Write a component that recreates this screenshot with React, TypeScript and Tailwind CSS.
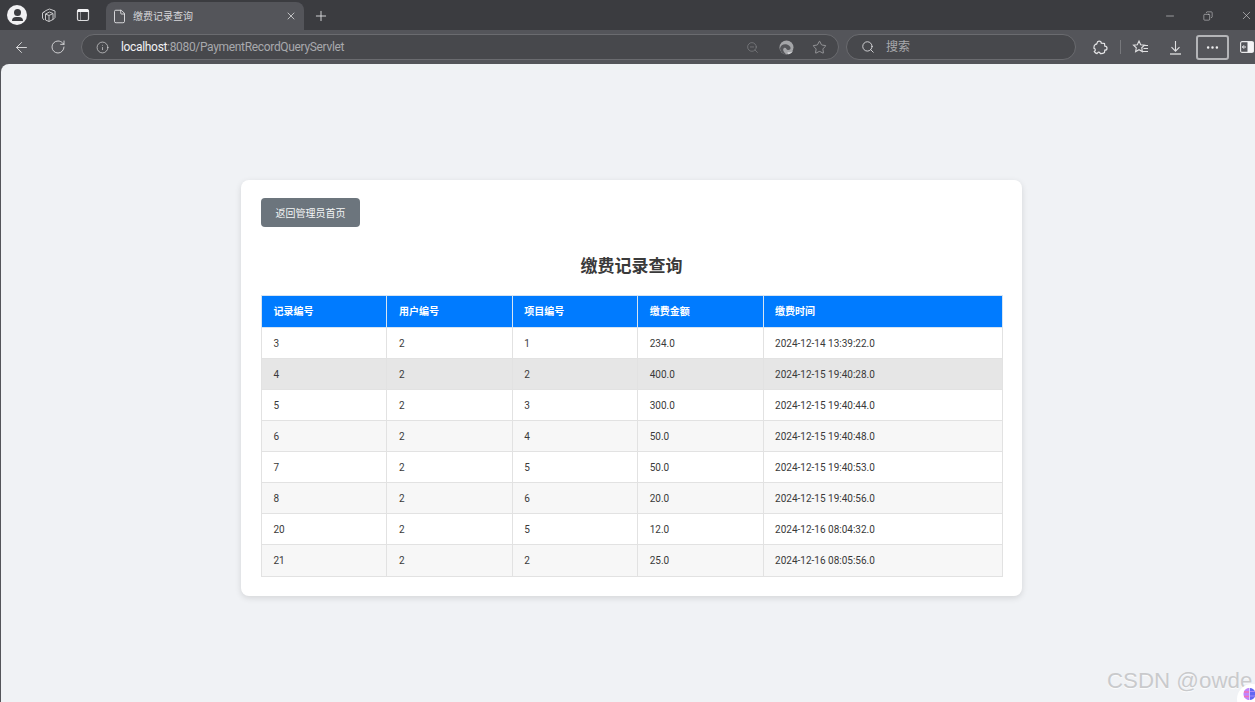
import React from "react";
import { ArrowLeft, RotateCw, Info, ZoomOut, Star, Search, Ellipsis, X, Plus, Minus, File, Copy } from "lucide-react";

const rows = [
  ["3", "2", "1", "234.0", "2024-12-14 13:39:22.0"],
  ["4", "2", "2", "400.0", "2024-12-15 19:40:28.0"],
  ["5", "2", "3", "300.0", "2024-12-15 19:40:44.0"],
  ["6", "2", "4", "50.0", "2024-12-15 19:40:48.0"],
  ["7", "2", "5", "50.0", "2024-12-15 19:40:53.0"],
  ["8", "2", "6", "20.0", "2024-12-15 19:40:56.0"],
  ["20", "2", "5", "12.0", "2024-12-16 08:04:32.0"],
  ["21", "2", "2", "25.0", "2024-12-16 08:05:56.0"],
];
const heads = ["记录编号", "用户编号", "项目编号", "缴费金额", "缴费时间"];

function TabsIcon() {
  return (
    <svg width="16" height="15" viewBox="0 0 16 15" fill="none" stroke="#c8c8ca" strokeWidth="1">
      <path d="M1.500 5 5 2.500 8.500 1 14 3v6.500L11.500 12" />
      <path d="M4 3.500 1.500 5v5L3 12" />
      <path d="M4.500 6 8.500 4 12 5.500v6L8 13.500 4.500 12Z" />
      <path d="M4.500 6 8 7.500 12 5.500M8 7.500v6" />
    </svg>
  );
}
function TabWinIcon() {
  return (
    <svg width="14" height="14" viewBox="0 0 14 14" fill="none">
      <rect x="1.500" y="1.500" width="11" height="11" rx="1.500" stroke="#dcdcde" strokeWidth="1.200" />
      <path d="M1.500 3.500a2 2 0 0 1 2-2h7a2 2 0 0 1 2 2Z" fill="#f4f4f6" stroke="#f4f4f6" />
      <path d="M4.500 4v8" stroke="#8b8c90" strokeWidth="1" />
    </svg>
  );
}
function EdgeIcon() {
  return (
    <svg width="15" height="15" viewBox="0 0 15 15">
      <circle cx="7.500" cy="7.500" r="7" fill="#a4a5a8" />
      <path d="M1 8.500C1.500 5 5 3.500 8 4.500c3 1 4.500 3.500 3 5-1 .8-3 .6-3.500-.5C7 7.800 6 7.500 5 8c-1.500 1-1 4 2.500 6.500C4 14.500 1.500 12 1 8.500Z" fill="#55565a" />
      <path d="M9 14.300c2-.3 4-1.500 5-3.300-2 1.500-4 1.500-5.500 1Z" fill="#d4d5d8" />
    </svg>
  );
}
function FavIcon() {
  return (
    <svg width="17" height="17" viewBox="0 0 17 17" fill="none" stroke="#e0e0e2" strokeWidth="1.100">
      <path d="M7 2 8.700 5.700 12.500 6.200 9.700 8.800 10.400 12.600 7 10.700 3.600 12.600 4.300 8.800 1.500 6.200 5.300 5.700Z" />
      <path d="M11.500 6.500h4.500M11.500 9.500h4.500M10.500 12.500h5.500" />
    </svg>
  );
}
function PuzzleIcon() {
  return (
    <svg width="15" height="15" viewBox="0 0 15 15" fill="none" stroke="#e4e4e6" strokeWidth="1.200">
      <path d="M6 1.200c1.400 0 2.300 1 2.300 2l3.200.3.300 2.700c1.300 0 2.200.8 2.200 2s-1 2-2.200 2l-.3 2.300c-1 .8-2.500 1.300-4 1.200-.5-1.300-1.500-1.800-2.500-1.300-.5.300-.8.700-1 1.200-1-.3-2-1-2.700-2 .8-.5 1.200-1.400.9-2.200C1.900 8.600 1.400 8.300.9 8.200.8 6.800 1.300 5 2.500 4.200c.5.300 1.200 0 1.400-.7C4.100 2.200 4.800 1.200 6 1.200Z" />
    </svg>
  );
}
function DownloadIcon() {
  return (
    <svg width="15" height="15" viewBox="0 0 15 15" fill="none" stroke="#e0e0e2" strokeWidth="1.100">
      <path d="M7.500 1v10M3.500 7.200l4 4 4-4" />
      <path d="M2 14h11" strokeWidth="1.300" />
    </svg>
  );
}
function SplitIcon() {
  return (
    <svg width="14" height="12" viewBox="0 0 14 12" fill="none">
      <rect x="0.600" y="0.600" width="12.800" height="10.800" rx="1.500" stroke="#e8e8ea" strokeWidth="1.100" />
      <rect x="7.500" y="1" width="6" height="10" fill="#f4f4f6" />
      <path d="M6 6H2.500M4 4.300 2.400 6 4 7.700" stroke="#f4f4f6" strokeWidth="1" />
    </svg>
  );
}
function Brain() {
  return (
    <svg width="13" height="14" viewBox="0 0 13 14">
      <path d="M6.200 1C3 1 .5 3.500.5 7s2.500 6 5.700 6Z" fill="#c084fc" />
      <path d="M6.800 1C10 1 12.500 3.500 12.500 7s-2.500 6-5.700 6Z" fill="#6366f1" />
      <path d="M1 5h5M1 9.500h5" stroke="#f472b6" strokeWidth="1.500" />
      <path d="M7 4.500h5M7 9h5" stroke="#a78bfa" strokeWidth="1.200" />
    </svg>
  );
}

export default function App() {
  return (
    <div className="relative w-[1255px] h-[702px] overflow-hidden flex flex-col bg-[#54555a] font-['Roboto','Noto_Sans_CJK_SC',sans-serif]">
      {/* tab strip */}
      <div className="h-[30px] shrink-0 bg-[#3b3c40] flex flex-col">
        <div className="h-[2px] flex">
          <div className="w-[206px] bg-[#3b3c40]" />
          <div className="flex-1 bg-[#1c1c1e]" />
          <div className="w-[289px] bg-[#3a3b36]" />
        </div>
        <div className="flex-1 flex items-center">
          <div className="w-[33px] flex justify-center pl-[1px]">
            <div className="w-5 h-5 rounded-full bg-[#f1f1f3] flex flex-col items-center justify-center">
              <div className="w-[7px] h-[7px] rounded-full bg-[#3b3c40]" />
              <div className="w-[11px] h-[4px] mt-[1px] rounded-t-full bg-[#3b3c40]" />
            </div>
          </div>
          <div className="w-[32px] flex justify-center"><TabsIcon /></div>
          <div className="w-[36px] flex justify-center"><TabWinIcon /></div>
          <div className="ml-[5px] mt-[2px] w-[198px] h-[28px] rounded-t-lg bg-[#54555a] flex items-center pl-[6px] pr-[7px]">
            <File size={15} strokeWidth={1.400} className="text-[#e8e8ea]" />
            <span className="ml-[6px] flex-1 text-[10px] text-[#d8d8da]">缴费记录查询</span>
            <X size={12} strokeWidth={1.500} className="text-[#e4e4e6]" />
          </div>
          <Plus size={16} strokeWidth={1.300} className="ml-[9px] mt-[1px] text-[#e8e8ea]" />
          <div className="flex-1" />
          <Minus size={12} strokeWidth={1.200} className="text-[#d8d8da] mr-[27px] mt-[1px]" />
          <Copy size={10} strokeWidth={1.300} className="text-[#d8d8da] mr-[27px] -scale-x-100 mt-[1px]" />
          <X size={13} strokeWidth={1.100} className="text-[#d8d8da] mr-[2px] mt-[1px]" />
        </div>
      </div>
      {/* toolbar */}
      <div className="h-[34px] shrink-0 flex items-center bg-[#54555a]">
        <ArrowLeft size={17} strokeWidth={1.300} className="ml-[13px] text-[#e0e0e2]" />
        <RotateCw size={16} strokeWidth={1.300} className="ml-[20px] text-[#e0e0e2]" />
        <div className="ml-[15px] w-[758px] h-[26px] rounded-full bg-[#47484c] border border-[#6a6b6f] flex items-center pl-[14px] pr-[11px]">
          <Info size={13} strokeWidth={1.200} className="text-[#e0e0e2]" />
          <span className="ml-[12px] flex-1 text-[12px] tracking-[-0.330px] text-[#a8a9ac]"><span className="text-[#f2f2f4]">localhost</span>:8080/PaymentRecordQueryServlet</span>
          <ZoomOut size={13} strokeWidth={1.200} className="text-[#85868a]" />
          <span className="ml-[20px] flex"><EdgeIcon /></span>
          <Star size={15} strokeWidth={1.100} className="ml-[18px] text-[#b4b5b8]" />
        </div>
        <div className="ml-[7px] w-[230px] h-[26px] rounded-full bg-[#47484c] border border-[#6a6b6f] flex items-center pl-[14px]">
          <Search size={14} strokeWidth={1.400} className="text-[#e8e8ea]" />
          <span className="ml-[11px] text-[12px] text-[#a8a9ac]">搜索</span>
        </div>
        <span className="ml-[17px] flex"><PuzzleIcon /></span>
        <div className="ml-[12px] w-px h-[14px] bg-[#77787c]" />
        <span className="ml-[11px] flex"><FavIcon /></span>
        <span className="ml-[19px] flex"><DownloadIcon /></span>
        <div className="ml-[13px] w-[33px] h-[25px] rounded-[3px] border-2 border-[#b4b5b8] flex items-center justify-center">
          <Ellipsis size={15} strokeWidth={2} className="text-[#eeeef0]" />
        </div>
        <span className="ml-[11px] flex"><SplitIcon /></span>
      </div>
      {/* page */}
      <div className="flex-1 bg-[#f0f2f5] rounded-tl-lg ml-[1px] flex justify-center pt-[116px] pl-[7px]">
        <div className="w-[781px] h-[416px] bg-white rounded-lg shadow-[0_2px_6px_rgba(0,0,0,0.12)] pt-[18px] px-[20px]">
          <button className="block w-[99px] h-[29px] pt-[1px] rounded-[4px] bg-[#6c757d] text-[10px] text-[#f4f5f6]">返回管理员首页</button>
          <h2 className="mt-[27px] h-[24px] leading-[24px] text-center text-[17px] font-bold text-[#3a3a3a]">缴费记录查询</h2>
          <table className="mt-[17px] w-[742px] table-fixed border-collapse text-[10px] text-[#3a3a3a]">
            <colgroup>
              <col className="w-[125.400px]" />
              <col className="w-[125.400px]" />
              <col className="w-[125.400px]" />
              <col className="w-[125.400px]" />
              <col />
            </colgroup>
            <thead>
              <tr className="h-[32px] bg-[#007bff] text-white">
                {heads.map((h) => (
                  <th key={h} className="border border-[#d6e4f2] pl-[11.500px] text-left font-bold">{h}</th>
                ))}
              </tr>
            </thead>
            <tbody>
              {rows.map((r, i) => (
                <tr key={r[0]} className={`h-[31px] last:h-[32px] ${i === 1 ? "bg-[#e6e6e6]" : i % 2 === 1 ? "bg-[#f7f7f7]" : "bg-white"}`}>
                  {r.map((c, j) => (
                    <td key={j} className="border border-[#e2e2e2] pl-[11.500px]">{c}</td>
                  ))}
                </tr>
              ))}
            </tbody>
          </table>
        </div>
      </div>
      {/* overlays */}
      <div className="absolute left-[1107px] top-[666px] text-[22.300px] leading-[30px] whitespace-nowrap font-['Liberation_Sans',sans-serif] text-[#c9cacc] [text-shadow:0_1px_1px_rgba(255,255,255,0.800)]">CSDN @owde</div>
      <div className="absolute left-[1237px] top-[684px] w-[30px] h-[30px] rounded-full bg-white pl-[6px] pt-[3px]"><Brain /></div>
    </div>
  );
}
